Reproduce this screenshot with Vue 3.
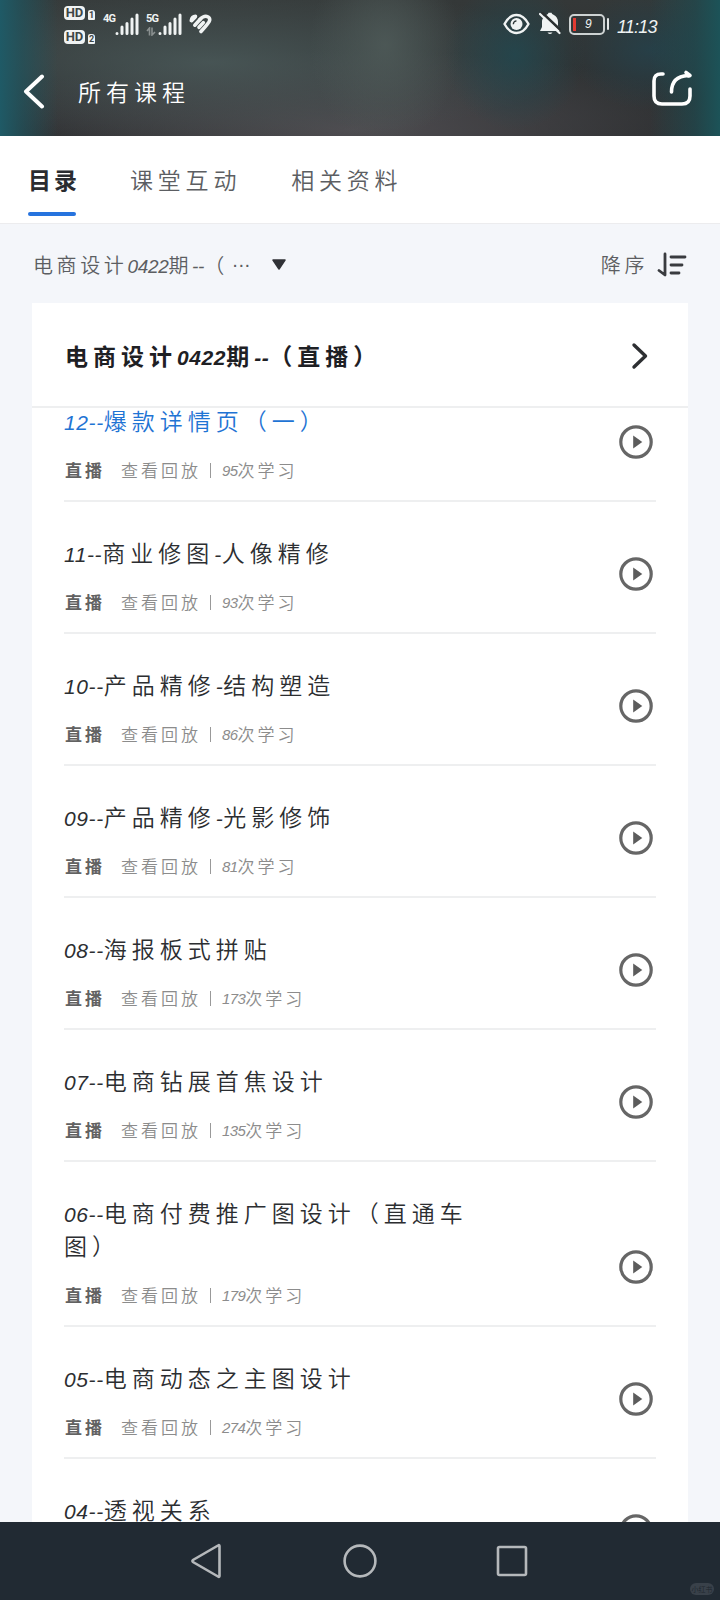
<script setup>
import { ref } from "vue";

const tabs = ["目录", "课堂互动", "相关资料"];
const activeTab = ref("目录");
const activeLesson = ref("12");

const lessons = ref([
  { no: "12", title: "爆款详情页（一）", count: 95 },
  { no: "11", title: "商业修图-人像精修", count: 93 },
  { no: "10", title: "产品精修-结构塑造", count: 86 },
  { no: "09", title: "产品精修-光影修饰", count: 81 },
  { no: "08", title: "海报板式拼贴", count: 173 },
  { no: "07", title: "电商钻展首焦设计", count: 135 },
  { no: "06", title: "电商付费推广图设计（直通车图）", count: 179 },
  { no: "05", title: "电商动态之主图设计", count: 274 },
  { no: "04", title: "透视关系", count: 168 },
]);

// latin and chinese runs are spaced differently
const runs = (text) =>
  text.match(/[\x21-\x7e]+|[^\x21-\x7e]+/g).map((t) => ({
    t,
    latin: /^[\x21-\x7e]/.test(t),
  }));
</script>
<template>
  <div class="page">
    <header class="header">
      <div class="status">
        <div class="hd_group">
          <div class="hd_row" v-for="n in 2" :key="n">
            <span class="hd">HD</span><span class="sim">{{ n }}</span>
          </div>
        </div>
        <div class="signal" v-for="net in ['4G', '5G']" :key="net">
          <div class="net">
            <span>{{ net }}</span>
            <svg v-if="net == '5G'" width="10" height="9" viewBox="0 0 10 9">
              <path d="M3.5 8.5V1L1 4M6 .5V8l3-3" fill="none" stroke="#8a9090" stroke-width="1.6" />
            </svg>
          </div>
          <svg width="24" height="23" viewBox="0 0 24 23">
            <path
              d="M2 20.5v0.1M7 14v6.5M12 10.500v10M17 6v14.500M22 2v18.500"
              stroke="#f0f3f3"
              stroke-width="3"
              stroke-linecap="round"
            />
          </svg>
        </div>
        <svg class="health" width="23" height="20" viewBox="0 0 23 20">
          <g fill="none" stroke="#f0f3f3" stroke-width="3.600" stroke-linecap="round">
            <path d="M2.300 6.500Q3 2.500 6.500 2.400" />
            <path d="M2.800 6.500 6 3.200" />
            <path d="M5.800 11.200 11.200 5.300" />
            <path d="M10 13.300 14.300 8.600" />
            <path d="M11.200 5.300C15.500.500 21.500 2 20.600 6.500Q20.300 8.500 12 17.500" />
          </g>
        </svg>
        <div class="spacer"></div>
        <svg class="eye" width="27" height="22" viewBox="0 0 27 22">
          <path
            d="M1.500 11C5 4.500 9 2 13.500 2S22 4.500 25.500 11C22 17.500 18 20 13.500 20S5 17.500 1.500 11Z"
            fill="none"
            stroke="#f0f3f3"
            stroke-width="2.400"
            stroke-linejoin="round"
          />
          <circle cx="13.500" cy="11" r="6" fill="#f0f3f3" />
          <path d="M10.300 11.200a3.500 3.500 0 0 1 3.200-3.400" fill="none" stroke="#2b3435" stroke-width="1.300" />
        </svg>
        <svg class="bell" width="22" height="23" viewBox="0 0 22 23">
          <path
            d="M8 2.500Q9.200 2.200 9.500.8h3q.3 1.400 2 2Q19 5 19 10v4l2 5H1l2-4V10Q3 5 8 2.500ZM8.500 20.500h5q-2.500 3-5 0Z"
            fill="#f0f3f3"
          />
          <path d="M2.500 0 22 18.500" stroke="#2b3031" stroke-width="2.500" />
          <path d="M1 2 20.500 21" stroke="#f0f3f3" stroke-width="2.200" stroke-linecap="round" />
        </svg>
        <div class="battery">
          <div class="cell"><i class="charge"></i><span>9</span></div>
          <i class="nub"></i>
        </div>
        <span class="clock">11:13</span>
      </div>
      <div class="title_bar">
        <svg width="22" height="36" viewBox="0 0 22 36">
          <path
            d="M19 2.500 3 17.500 19 32.500"
            fill="none"
            stroke="#fff"
            stroke-width="4"
            stroke-linecap="round"
            stroke-linejoin="round"
          />
        </svg>
        <h1>所有课程</h1>
        <svg class="share" width="42" height="38" viewBox="0 0 42 38">
          <g fill="none" stroke="#fff" stroke-width="3.600" stroke-linecap="round" stroke-linejoin="round">
            <path d="M12 5H10Q3 5 3 12V27Q3 35 11 35H31Q39 35 39 27V20" />
            <path d="M20.500 23C20.500 12 26 7 37 6.500" />
            <path d="M35 3.500 39 6.500 37.500 7" />
          </g>
        </svg>
      </div>
    </header>

    <nav class="tabs">
      <button
        v-for="tab in tabs"
        :key="tab"
        class="tab"
        :class="{ active: activeTab == tab }"
        @click="activeTab = tab"
      >
        {{ tab }}
      </button>
    </nav>

    <div class="filter">
      <span class="term">
        <span v-for="(r, i) in runs('电商设计0422期--（')" :key="i" :class="{ latin: r.latin }">{{ r.t }}</span>
      </span>
      <span class="dots">···</span>
      <svg width="14" height="11" viewBox="0 0 14 11">
        <path d="M1 1H13L7 10Z" fill="#303236" stroke="#303236" stroke-width="1.500" stroke-linejoin="round" />
      </svg>
      <div class="spacer"></div>
      <span class="order">降序</span>
      <svg width="30" height="26" viewBox="0 0 30 26">
        <path
          d="M2 18.500 8 23V2M14 5H28M14 13H25M14 21H22"
          fill="none"
          stroke="#393b3f"
          stroke-width="2.800"
          stroke-linecap="round"
          stroke-linejoin="round"
        />
      </svg>
    </div>

    <main class="card">
      <div class="card_head">
        <h2>
          <span v-for="(r, i) in runs('电商设计0422期--（直播）')" :key="i" :class="{ latin: r.latin }">{{ r.t }}</span>
        </h2>
        <svg class="more" width="18" height="28" viewBox="0 0 18 28">
          <path
            d="M3 3 14.500 14 3 25"
            fill="none"
            stroke="#2d2f32"
            stroke-width="3.400"
            stroke-linecap="round"
            stroke-linejoin="round"
          />
        </svg>
      </div>
      <div class="list_view">
        <ul class="list">
          <li
            v-for="item in lessons"
            :key="item.no"
            class="lesson"
            :class="{ current: activeLesson == item.no }"
            @click="activeLesson = item.no"
          >
            <div class="info">
              <div class="name">
                <span
                  v-for="(r, i) in runs(item.no + '--' + item.title)"
                  :key="i"
                  :class="{ latin: r.latin }"
                  >{{ r.t }}</span
                >
              </div>
              <div class="meta">
                <b>直播</b>
                <span>查看回放</span>
                <i class="bar"></i>
                <span class="latin">{{ item.count }}</span>
                <span>次学习</span>
              </div>
            </div>
            <svg class="play" width="34" height="34" viewBox="0 0 34 34">
              <circle cx="17" cy="17" r="15.200" fill="none" stroke="#666" stroke-width="3.200" />
              <path d="M14.200 10.500V23.500L23.300 17Z" fill="#5c5c5c" />
            </svg>
          </li>
        </ul>
      </div>
    </main>

    <footer class="navbar">
      <svg width="34" height="36" viewBox="0 0 34 36">
        <path d="M28.500 3V33Q28.500 34.500 27 33.500L2 19Q.8 18 2 17L27 2.500Q28.500 1.500 28.500 3Z" />
      </svg>
      <svg width="34" height="36" viewBox="0 0 34 36"><circle cx="17" cy="18" r="15.400" /></svg>
      <svg width="34" height="36" viewBox="0 0 34 36"><rect x="3" y="4" width="28" height="28" rx="1.500" /></svg>
      <span class="mark">小红书</span>
    </footer>
  </div>
</template>
<style>
body {
  background-color: #f4f6fa;
}
</style>
<style scoped>
.page {
  display: flex;
  flex-direction: column;
  width: 720px;
  height: 1600px;
  overflow: hidden;
  font-family: "Noto Sans CJK SC", sans-serif;
  font-weight: 350;
  color: #303236;
}

svg {
  display: block;
  flex-shrink: 0;
}

.spacer {
  flex: 1;
}

.latin {
  font-family: "Liberation Sans", sans-serif;
  font-style: italic;
  line-height: 1;
}

.header {
  flex-shrink: 0;
  height: 136px;
  background:
    linear-gradient(90deg, #1f5a66 0, rgba(31, 84, 94, 0.7) 22px, transparent 58px),
    linear-gradient(270deg, #1c5358 0, rgba(28, 78, 84, 0.6) 25px, transparent 70px),
    radial-gradient(ellipse 70px 75px at 515px 55px, rgba(33, 72, 80, 0.8), transparent),
    radial-gradient(ellipse 80px 60px at 650px 50px, rgba(36, 66, 76, 0.8), transparent),
    radial-gradient(ellipse 75px 100px at 385px 45px, rgba(80, 92, 90, 0.8), transparent),
    radial-gradient(ellipse 360px 80px at 210px 62px, rgba(76, 92, 92, 0.8), transparent),
    radial-gradient(ellipse 380px 80px at 350px 130px, #4e4c50, transparent),
    linear-gradient(#343838, #2b2d2f);
}

.status {
  display: flex;
  height: 48px;
  padding: 0 64px;
  color: #f0f3f3;
}

.hd_group {
  display: flex;
  flex-direction: column;
  gap: 10px;
  width: 39px;
  padding-top: 6px;
}

.hd_row {
  display: flex;
  align-items: flex-end;
  gap: 3px;
  height: 14px;
}

.hd,
.sim {
  background-color: #f0f3f3;
  color: #3d4546;
  font: bold 13px/14px Roboto, sans-serif;
  text-align: center;
}

.hd {
  width: 21px;
  border-radius: 4px;
}

.sim {
  width: 7px;
  border-radius: 2px 3px 1px 1px;
  font-size: 9px;
  line-height: 10px;
}

.signal {
  display: flex;
  align-items: flex-start;
  width: 43px;
  padding-top: 13px;
}

.net {
  width: 12px;
  height: 23px;
  font: bold 11px/11px Roboto, sans-serif;
  letter-spacing: -0.7px;
}

.net svg {
  margin-top: 3px;
}

.health {
  margin-top: 14px;
}

.eye {
  margin: 13px 9px 0 0;
}

.bell {
  margin: 12px 8px 0 0;
}

.battery {
  display: flex;
  align-items: center;
  gap: 2px;
  height: 22px;
  margin: 13px 8px 0 0;
}

.cell {
  display: flex;
  align-items: center;
  gap: 9px;
  box-sizing: border-box;
  width: 36px;
  height: 21px;
  padding-left: 2px;
  border: 2px solid #cdd2d2;
  border-radius: 5px;
  font: italic 12px/1 "Liberation Sans", sans-serif;
}

.charge {
  width: 3px;
  height: 13px;
  background-color: #e23b32;
}

.nub {
  width: 2px;
  height: 12px;
  border-radius: 1px;
  background-color: #e3e7e7;
}

.clock {
  width: 39px;
  margin-top: 16px;
  font: italic 18px/22px "Liberation Sans", sans-serif;
  letter-spacing: -0.8px;
}

.title_bar {
  display: flex;
  align-items: center;
  height: 88px;
  padding: 0 27px 0 23px;
}

h1 {
  flex: 1;
  margin: 0 0 2px 33px;
  font-size: 23px;
  font-weight: 350;
  letter-spacing: 5px;
  color: #fff;
}

.share {
  margin-bottom: 8px;
}

.tabs {
  display: flex;
  flex-shrink: 0;
  gap: 50px;
  box-sizing: border-box;
  height: 88px;
  padding: 0 28px 7px;
  background-color: #fff;
  border-bottom: 1px solid #ececee;
}

.tab {
  display: flex;
  flex-direction: column;
  justify-content: space-between;
  padding: 25px 0 0;
  border: none;
  background: none;
  font-family: inherit;
  font-size: 23px;
  font-weight: 350;
  line-height: 36px;
  letter-spacing: 4.8px;
  color: #5c5e62;
  cursor: pointer;
}

.tab.active {
  width: 48px;
  margin-right: 4px;
  font-weight: 700;
  letter-spacing: 3px;
  color: #2a2c30;
  white-space: nowrap;
}

.tab.active::after {
  content: "";
  width: 48px;
  height: 4px;
  border-radius: 2px;
  background-color: #2673de;
}

.filter {
  display: flex;
  flex-shrink: 0;
  align-items: center;
  height: 79px;
  padding: 2px 33px 0 33px;
  box-sizing: border-box;
  font-size: 20px;
  letter-spacing: 3.6px;
  color: #5c5e62;
}

.term {
  display: flex;
  align-items: baseline;
}

.term .latin {
  font-size: 19px;
  letter-spacing: -0.3px;
}

.dots {
  margin: 0 22px 0 4px;
  letter-spacing: -0.5px;
  font-family: "Liberation Sans", sans-serif;
}

.order {
  margin-right: 9px;
}

.card {
  display: flex;
  flex: 1;
  flex-direction: column;
  min-height: 0;
  margin: 0 32px;
  background-color: #fff;
}

.card_head {
  display: flex;
  flex-shrink: 0;
  align-items: center;
  justify-content: space-between;
  box-sizing: border-box;
  height: 105px;
  padding: 0 39px 0 33px;
  border-bottom: 2px solid #eeeff0;
}

.more {
  margin-top: 2px;
}

h2 {
  margin: 0;
  font-size: 23px;
  font-weight: 700;
  letter-spacing: 5px;
  color: #1e2024;
}

h2 .latin {
  font-size: 21px;
  letter-spacing: 0.6px;
}

.list_view {
  flex: 1;
  min-height: 0;
  overflow: hidden;
}

.list {
  margin: -38px 0 0;
  padding: 0 32px;
  list-style: none;
}

.lesson {
  display: flex;
  align-items: flex-end;
  justify-content: space-between;
  padding: 34px 3px 18px 0;
  border-bottom: 2px solid #eeeff0;
  cursor: pointer;
}

.name {
  width: 415px;
  font-size: 23px;
  line-height: 33px;
  letter-spacing: 5px;
  color: #2c2e31;
}

.name .latin {
  font-size: 21px;
  letter-spacing: 0.6px;
}

.current .name {
  color: #1f74d4;
}

.meta {
  display: flex;
  align-items: center;
  height: 24px;
  margin-top: 21px;
  font-size: 17px;
  line-height: 24px;
  letter-spacing: 3px;
  color: #8c8c8c;
}

.meta b {
  margin: 0 16px 0 1px;
  font-weight: 700;
  color: #626262;
}

.meta .latin {
  font-size: 15px;
  letter-spacing: -0.6px;
}

.bar {
  width: 1px;
  height: 15px;
  margin: 0 11px 0 9px;
  background-color: #999;
}

.play {
  margin-bottom: 23px;
}

.navbar {
  position: relative;
  display: flex;
  flex-shrink: 0;
  justify-content: center;
  gap: 118px;
  height: 78px;
  padding-top: 21px;
  box-sizing: border-box;
  background-color: #212a33;
}

.navbar svg {
  fill: none;
  stroke: #b5b8bb;
  stroke-width: 2.6;
}

.mark {
  position: absolute;
  right: 6px;
  bottom: 5px;
  width: 24px;
  border-radius: 6px;
  background-color: #39414a;
  font-size: 7px;
  line-height: 12px;
  text-align: center;
  color: #1d252d;
}
</style>
